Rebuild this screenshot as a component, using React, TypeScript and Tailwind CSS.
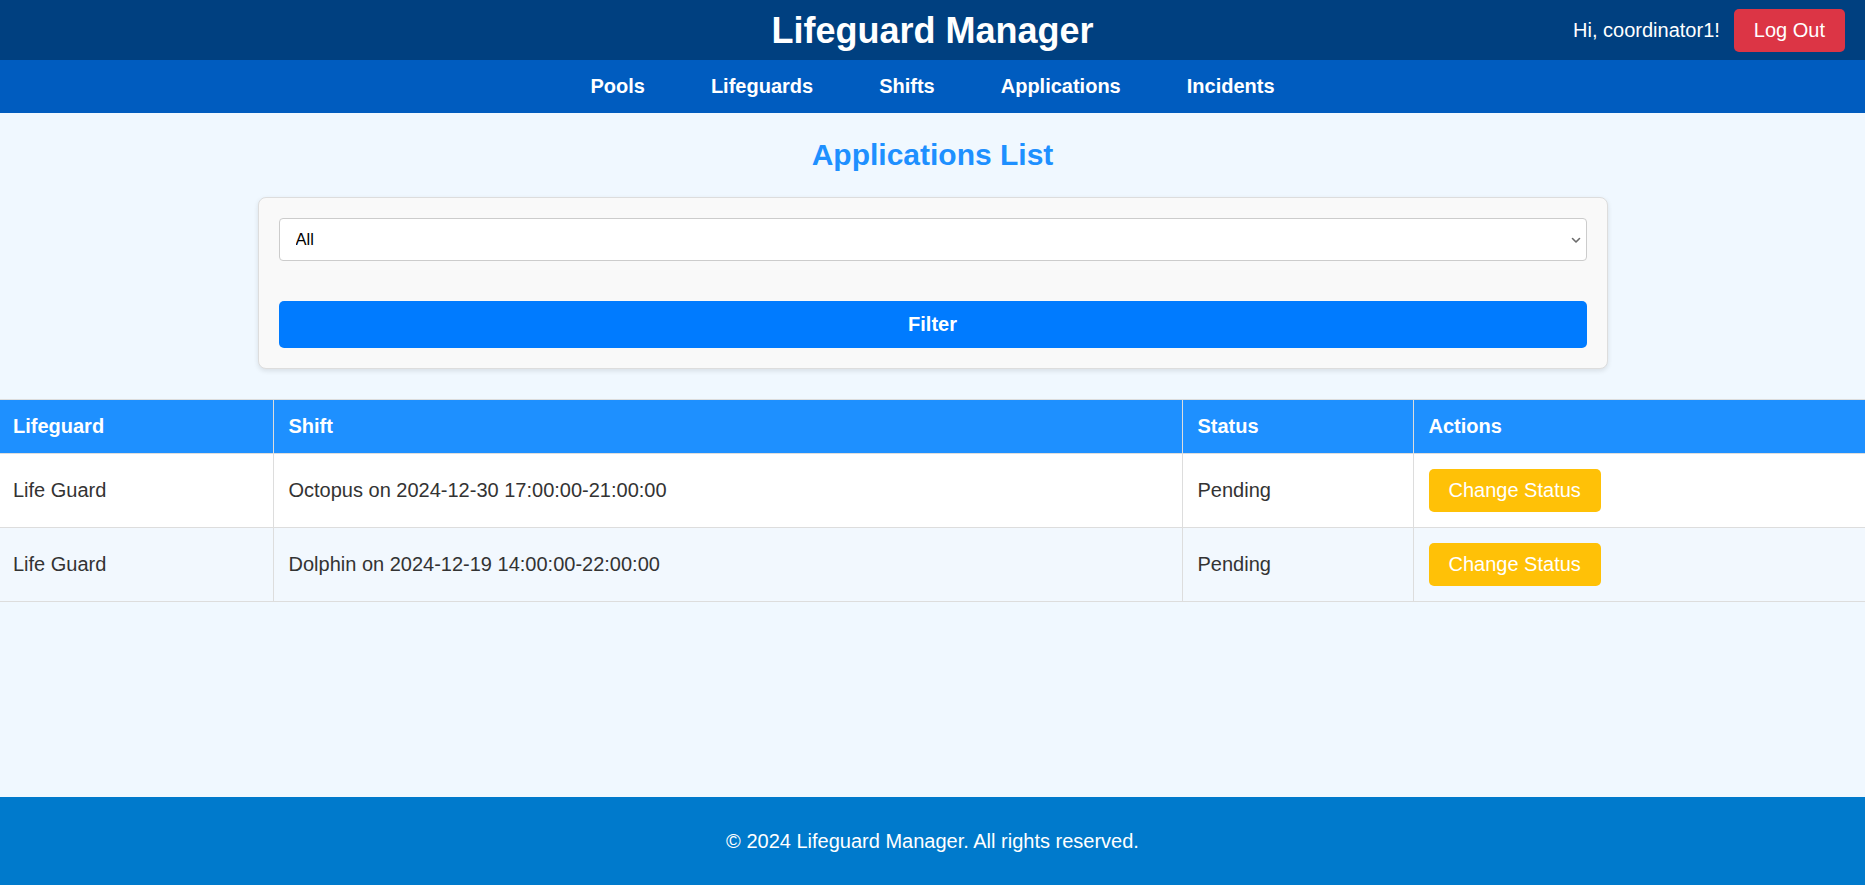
import React from "react";

const navigation = ["Pools", "Lifeguards", "Shifts", "Applications", "Incidents"];

const applications = [
  {
    lifeguard: "Life Guard",
    shift: "Octopus on 2024-12-30 17:00:00-21:00:00",
    status: "Pending",
  },
  {
    lifeguard: "Life Guard",
    shift: "Dolphin on 2024-12-19 14:00:00-22:00:00",
    status: "Pending",
  },
];

function Header() {
  return (
    <header className="grid h-[60px] grid-cols-[1fr_auto_1fr] items-center bg-[#004080] px-5 text-white">
      <div />
      <h1 className="text-[36px] font-bold leading-[41px]">Lifeguard Manager</h1>
      <div className="flex items-center justify-end gap-[14px]">
        <span className="text-[20px] leading-[23px]">Hi, coordinator1!</span>
        <button className="rounded-[5px] bg-[#dc3545] px-5 py-[10px] text-[20px] leading-[23px] text-white">
          Log Out
        </button>
      </div>
    </header>
  );
}

function Nav() {
  return (
    <nav className="flex h-[53px] items-center justify-center gap-[66px] bg-[#005cbf]">
      {navigation.map((item) => (
        <a key={item} href="#" className="text-[20px] font-bold leading-[23px] text-white">
          {item}
        </a>
      ))}
    </nav>
  );
}

function FilterCard() {
  return (
    <div className="mx-auto w-[1350px] rounded-lg border border-[#ddd] bg-[#f9f9f9] p-5 shadow-[0_2px_5px_rgba(0,0,0,0.1)]">
      <div className="relative">
        <select className="block h-[43px] w-full appearance-none rounded-[4px] border border-[#ccc] bg-white px-4 text-[16.5px] text-black">
          <option>All</option>
          <option>Pending</option>
          <option>Approved</option>
          <option>Rejected</option>
        </select>
        <svg
          className="pointer-events-none absolute right-[5px] top-1/2 h-[12px] w-[12px] -translate-y-1/2"
          viewBox="0 0 12 12"
          fill="none"
          stroke="#6b6b6b"
          strokeWidth="1.6"
          strokeLinecap="round"
          strokeLinejoin="round"
        >
          <path d="M2.5 4.5 6 8l3.5-3.5" />
        </svg>
      </div>
      <button className="mt-10 h-[47px] w-full rounded-[5px] bg-[#007bff] text-[20px] font-bold leading-[23px] text-white">
        Filter
      </button>
    </div>
  );
}

function ApplicationsTable() {
  const th = "border border-[#ddd] p-[15px] text-left text-[20px] font-bold leading-[23px] text-white";
  const td = "border border-[#ddd] p-[15px] text-[20px] leading-[23px] text-[#333]";
  return (
    <table className="mt-[30px] w-full table-fixed border-collapse">
      <thead>
        <tr className="bg-[#1e90ff]">
          <th className={`${th} w-[273px] border-l-0 pl-[13px]`}>Lifeguard</th>
          <th className={`${th} w-[909px]`}>Shift</th>
          <th className={`${th} w-[231px]`}>Status</th>
          <th className={`${th} border-r-0`}>Actions</th>
        </tr>
      </thead>
      <tbody>
        {applications.map((app, i) => (
          <tr key={i} className={i % 2 === 1 ? "bg-[#f2f8fe]" : "bg-white"}>
            <td className={`${td} border-l-0 pl-[13px]`}>{app.lifeguard}</td>
            <td className={td}>{app.shift}</td>
            <td className={td}>{app.status}</td>
            <td className={`${td} border-r-0`}>
              <button className="rounded-[5px] bg-[#ffc107] px-5 py-[10px] text-[20px] leading-[23px] text-white">
                Change Status
              </button>
            </td>
          </tr>
        ))}
      </tbody>
    </table>
  );
}

export default function App() {
  return (
    <div className="flex min-h-screen flex-col font-['Liberation_Sans',Arial,sans-serif]">
      <Header />
      <Nav />
      <main className="flex-1 bg-[#f0f8ff] pt-[25px]">
        <h2 className="mb-[25px] text-center text-[30px] font-bold leading-[34px] text-[#1e90ff]">
          Applications List
        </h2>
        <FilterCard />
        <ApplicationsTable />
      </main>
      <footer className="flex h-[88px] items-center justify-center bg-[#007acc] text-[20px] leading-[23px] text-white">
        © 2024 Lifeguard Manager. All rights reserved.
      </footer>
    </div>
  );
}
